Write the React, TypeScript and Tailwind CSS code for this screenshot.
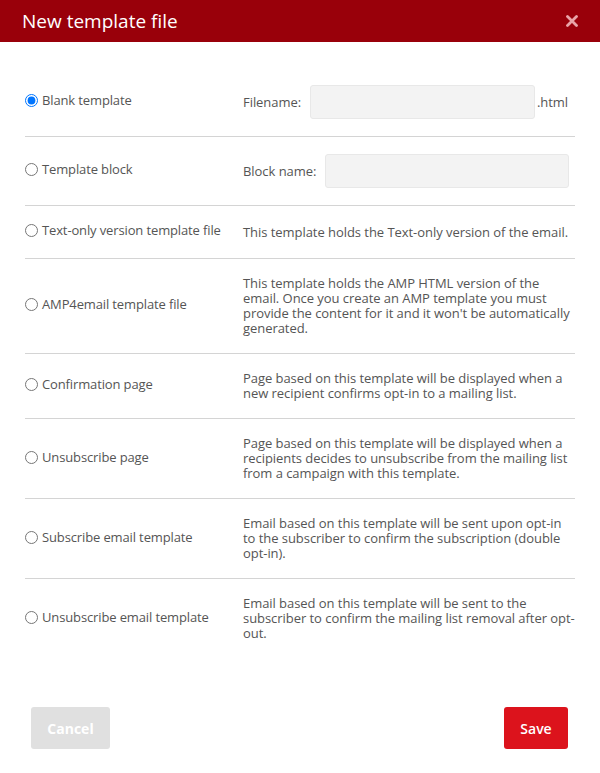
import { useState } from "react";

type Option = {
  id: string;
  label: string;
  description?: string;
  field?: "filename" | "block";
};

const options: Option[] = [
  { id: "blank", label: "Blank template", field: "filename" },
  { id: "block", label: "Template block", field: "block" },
  {
    id: "text",
    label: "Text-only version template file",
    description: "This template holds the Text-only version of the email.",
  },
  {
    id: "amp",
    label: "AMP4email template file",
    description:
      "This template holds the AMP HTML version of the email. Once you create an AMP template you must provide the content for it and it won't be automatically generated.",
  },
  {
    id: "confirm",
    label: "Confirmation page",
    description:
      "Page based on this template will be displayed when a new recipient confirms opt-in to a mailing list.",
  },
  {
    id: "unsub",
    label: "Unsubscribe page",
    description:
      "Page based on this template will be displayed when a recipients decides to unsubscribe from the mailing list from a campaign with this template.",
  },
  {
    id: "subemail",
    label: "Subscribe email template",
    description:
      "Email based on this template will be sent upon opt-in to the subscriber to confirm the subscription (double opt-in).",
  },
  {
    id: "unsubemail",
    label: "Unsubscribe email template",
    description:
      "Email based on this template will be sent to the subscriber to confirm the mailing list removal after opt-out.",
  },
];

export default function App() {
  const [selected, setSelected] = useState("blank");

  return (
    <div className="w-[600px] h-[773px] bg-white flex flex-col font-['Open_Sans',sans-serif] text-[13px] text-[#555]">
      {/* Header */}
      <div className="h-[42px] bg-[#99000a] flex items-center justify-between pl-[22px] pr-[22px] shrink-0">
        <h1 className="text-white text-[19px] leading-none">New template file</h1>
        <button className="text-[#e9a4a8]">
          <svg width="12" height="12" viewBox="0 0 12 12" className="block">
            <path d="M1.5 1.5 L10.5 10.5 M10.5 1.5 L1.5 10.5" stroke="currentColor" strokeWidth="2.8" strokeLinecap="round" />
          </svg>
        </button>
      </div>

      {/* Options */}
      <div className="px-[25px] pt-[26px] flex-1">
        {options.map((opt, i) => (
          <div
            key={opt.id}
            className={`flex items-center py-[17px] ${i < options.length - 1 ? "border-b border-[#d4d4d4]" : ""}`}
          >
            <label className="w-[218px] shrink-0 min-h-[18px] pb-[3px] flex items-center gap-[4px] cursor-pointer">
              <input
                type="radio"
                name="template"
                checked={selected === opt.id}
                onChange={() => setSelected(opt.id)}
                className="m-0 w-[13px] h-[13px] accent-[#0075ff]"
              />
              <span className="leading-[15px] tracking-[-0.13px]">{opt.label}</span>
            </label>
            <div className="flex-1 leading-[15px] tracking-[-0.05px]">
              {opt.field === "filename" && (
                <div className="flex items-center">
                  <span className="w-[67px]">Filename:</span>
                  <div className="w-[225px] h-[34px] bg-[#f3f3f3] border border-[#e8e8e8] rounded-[3px]" />
                  <span className="ml-[2px]">.html</span>
                </div>
              )}
              {opt.field === "block" && (
                <div className="flex items-center">
                  <span className="w-[82px]">Block name:</span>
                  <div className="w-[244px] h-[34px] bg-[#f3f3f3] border border-[#e8e8e8] rounded-[3px]" />
                </div>
              )}
              {opt.description && <p>{opt.description}</p>}
            </div>
          </div>
        ))}
      </div>

      {/* Footer */}
      <div className="flex justify-between items-center pl-[31px] pr-[32px] pb-[24px] shrink-0">
        <button className="w-[79px] h-[42px] rounded-[3px] bg-[#e0e0e0] text-white font-bold text-[14px]">
          Cancel
        </button>
        <button className="w-[64px] h-[42px] rounded-[3px] bg-[#dc131c] text-white font-semibold text-[14px]">
          Save
        </button>
      </div>
    </div>
  );
}
